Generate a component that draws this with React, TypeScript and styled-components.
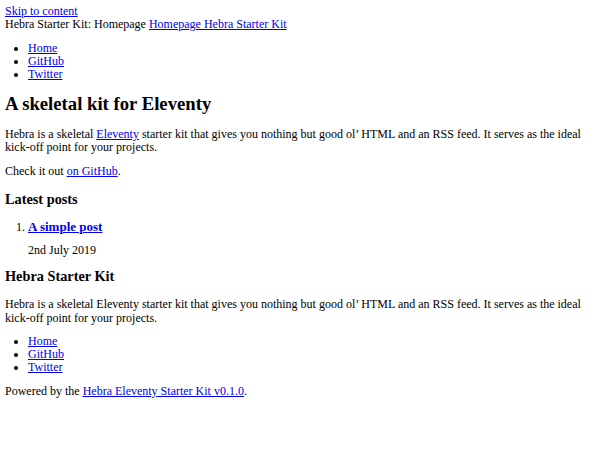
import React from "react";
import styled, { createGlobalStyle } from "styled-components";

const Global = createGlobalStyle`
  body {
    margin: 5px;
    font-family: "Liberation Serif", "Times New Roman", serif;
    font-size: 12px;
    line-height: 1.107;
    color: #000;
    background: #fff;
  }
  a { color: #0000ee; }
`;

const Page = styled.div`
  display: block;
`;

const SkipLink = styled.a`
  display: block;
  width: max-content;
`;

const SiteHeader = styled.header`
  display: block;
`;

const NavList = styled.ul`
  margin: 10px 0 8px;
  padding-left: 23px;
  list-style: disc;
`;

const Title = styled.h1`
  font-size: 18.7px;
  margin: 13px 0;
  font-weight: bold;
`;

const Para = styled.p`
  margin: 10px 0;
`;

const SubTitle = styled.h2<{ $top?: number; $bottom?: number }>`
  font-size: 14.3px;
  margin: ${(p) => p.$top ?? 14}px 0 ${(p) => p.$bottom ?? 11}px;
  font-weight: bold;
`;

const PostList = styled.ol`
  margin: 12px 0;
  padding-left: 23px;
`;

const PostTitle = styled.h3`
  font-size: 13px;
  margin: 0;
  font-weight: bold;
`;

const PostDate = styled.p`
  margin: 10px 0;
`;

const Footer = styled.footer`
  display: block;
`;

const navItems = ["Home", "GitHub", "Twitter"];

export default function App() {
  return (
    <Page>
      <Global />
      <SkipLink href="#main">Skip to content</SkipLink>
      <SiteHeader>
        Hebra Starter Kit: Homepage <a href="#">Homepage Hebra Starter Kit</a>
        <nav>
          <NavList>
            {navItems.map((n) => (
              <li key={n}>
                <a href="#">{n}</a>
              </li>
            ))}
          </NavList>
        </nav>
      </SiteHeader>
      <main id="main">
        <Title>A skeletal kit for Eleventy</Title>
        <Para>
          Hebra is a skeletal <a href="#">Eleventy</a> starter kit that gives you
          nothing but good ol’ HTML and an RSS feed. It serves as the ideal
          kick-off point for your projects.
        </Para>
        <Para>
          Check it out <a href="#">on GitHub</a>.
        </Para>
        <SubTitle>Latest posts</SubTitle>
        <PostList>
          <li>
            <PostTitle>
              <a href="#">A simple post</a>
            </PostTitle>
            <PostDate>2nd July 2019</PostDate>
          </li>
        </PostList>
      </main>
      <Footer>
        <SubTitle $top={12} $bottom={13}>
          Hebra Starter Kit
        </SubTitle>
        <Para>
          Hebra is a skeletal Eleventy starter kit that gives you nothing but
          good ol’ HTML and an RSS feed. It serves as the ideal kick-off point
          for your projects.
        </Para>
        <NavList>
          {navItems.map((n) => (
            <li key={n}>
              <a href="#">{n}</a>
            </li>
          ))}
        </NavList>
        <Para>
          Powered by the <a href="#">Hebra Eleventy Starter Kit v0.1.0</a>.
        </Para>
      </Footer>
    </Page>
  );
}
